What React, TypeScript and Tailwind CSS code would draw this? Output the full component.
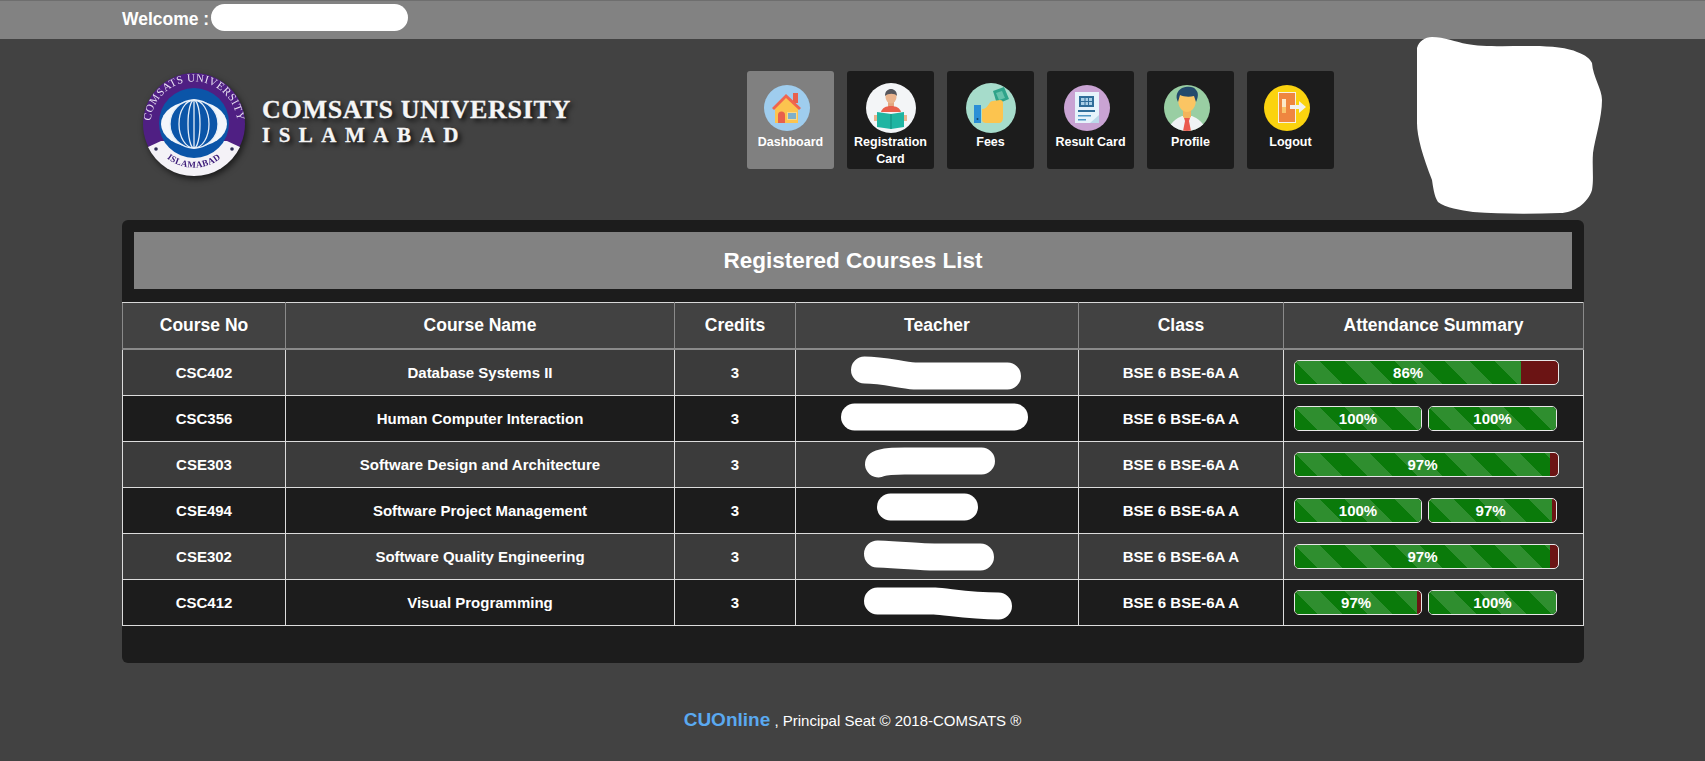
import React from "react";

const courses = [
  { no: "CSC402", name: "Database Systems II", teacher: "M70 18C90 18 105 23 120 24H213", bars: [86] },
  { no: "CSC356", name: "Human Computer Interaction", teacher: "M60 18H220", bars: [100, 100] },
  { no: "CSE303", name: "Software Design and Architecture", teacher: "M84 19C90 16 100 16 110 16H187", bars: [97] },
  { no: "CSE494", name: "Software Project Management", teacher: "M96 16H170", bars: [100, 97] },
  { no: "CSE302", name: "Software Quality Engineering", teacher: "M83 17C110 18 125 20 140 20H186", bars: [97] },
  { no: "CSC412", name: "Visual Programming", teacher: "M83 18H140C155 19 175 23 204 23", bars: [97, 100] },
];

function ProgressBar({ value, className }: { value: number; className: string }) {
  return (
    <div className={`flex h-[25px] overflow-hidden rounded-[5px] border border-[#e8e8e8] bg-[#6b1414] ${className}`}>
      <div
        className="flex items-center justify-center bg-[#0a7a0a] bg-[linear-gradient(45deg,rgba(255,255,255,0.15)_25%,transparent_25%,transparent_50%,rgba(255,255,255,0.15)_50%,rgba(255,255,255,0.15)_75%,transparent_75%,transparent)] bg-[size:50px_50px] pt-[2px] text-[15px] font-bold text-white"
        style={{ width: `${value}%` }}
      >
        {value}%
      </div>
    </div>
  );
}

function NavItem({ label, active, icon }: { label: React.ReactNode; active?: boolean; icon: React.ReactNode }) {
  return (
    <div className={`flex h-[98px] w-[87px] flex-col items-center rounded-[3px] pt-[13px] text-center text-[12.5px] leading-[17px] font-bold text-white ${active ? "bg-[#808080]" : "bg-[#1c1c1c]"}`}>
      <div className="mb-[2px] flex h-[48px] items-center justify-center">{icon}</div>
      {label}
    </div>
  );
}

function Seal() {
  return (
    <svg width="106" height="106" viewBox="0 0 106 106" className="drop-shadow-[2px_3px_3px_rgba(0,0,0,0.6)]">
      <defs>
        <path id="sealTop" d="M 15 75 A 43.500 43.500 0 1 1 91 75" />
        <path id="sealBottom" d="M 14 73 A 44 44 0 0 0 92 73" />
      </defs>
      <circle cx="53" cy="53" r="51" fill="#4f1f83" />
      <path d="M 7 76 A 51 51 0 0 0 99 76 L 86 70 L 20 70 Z" fill="#f4f2f7" />
      <circle cx="53" cy="52" r="35" fill="#0b55a8" />
      <ellipse cx="53" cy="53" rx="33" ry="23" fill="#f2f6fb" />
      <ellipse cx="53" cy="53" rx="24" ry="24" fill="#0b55a8" />
      <g fill="none" stroke="#e6eef8" strokeWidth="1.3">
        <ellipse cx="53" cy="53" rx="24" ry="24" />
        <ellipse cx="53" cy="53" rx="15" ry="24" />
        <ellipse cx="53" cy="53" rx="6" ry="24" />
        <path d="M 53 29 V 77" />
      </g>
      <text fontFamily="'Liberation Serif', serif" fontSize="11" fill="#e9e2f2" letterSpacing="0.5">
        <textPath href="#sealTop" startOffset="50%" textAnchor="middle">COMSATS UNIVERSITY</textPath>
      </text>
      <text fontFamily="'Liberation Serif', serif" fontWeight="700" fontSize="9" fill="#3b1a78" letterSpacing="0.4">
        <textPath href="#sealBottom" startOffset="50%" textAnchor="middle">ISLAMABAD</textPath>
      </text>
      <circle cx="15" cy="78" r="1.8" fill="#2b2b55" />
      <circle cx="91" cy="78" r="1.8" fill="#2b2b55" />
    </svg>
  );
}

const HomeIcon = (
  <svg width="46" height="46" viewBox="0 0 46 46" className="mr-[7px]">
    <circle cx="23" cy="23" r="23" fill="#9fcdee" />
    <path d="M29 8h5v10h-5z" fill="#e8604c" />
    <path d="M11 22 23 12l11 10v16H11z" fill="#fcc44f" />
    <path d="M8 23 22 9l15 14-2 2-13-12L10 25z" fill="#f0654e" />
    <path d="M14 38v-8a3.500 3.500 0 0 1 7 0v8z" fill="#e8604c" />
    <path d="M23 27h10v8H23z" fill="#f7d98a" />
    <path d="M24 28h8v6h-8z" fill="#7fb0c9" />
  </svg>
);

const ReaderIcon = (
  <svg width="50" height="50" viewBox="0 0 50 50">
    <circle cx="25" cy="25" r="25" fill="#f3f5f7" />
    <path d="M22 18h6v8h-6z" fill="#e3a67f" />
    <ellipse cx="25" cy="14" rx="5.500" ry="6.500" fill="#eab48e" />
    <path d="M19 13c0-5 3-7 6-7s6 2 6 7c-2-3-9-3-12 0z" fill="#55565c" />
    <path d="M15 29c1-4 5-6 10-6s9 2 10 6z" fill="#e8604c" />
    <path d="M11 29l14 2 13-2v15l-13 2-14-2z" fill="#1fb5a2" />
    <path d="M24.500 31h1v15h-1z" fill="#148a7b" />
    <path d="M8 32h3v6H8zM38 32h3v6h-3z" fill="#eab48e" />
  </svg>
);

const FeesIcon = (
  <svg width="50" height="50" viewBox="0 0 50 50">
    <circle cx="25" cy="25" r="25" fill="#a6dccb" />
    <path d="M27 8 38 4l5 12-12 5z" fill="#2fa38a" />
    <path d="M30 10l6-2 3 7-6 2z" fill="#66c2ab" />
    <path d="M8 22h7v18H8z" fill="#2b8fd6" />
    <path d="M16 26c3 0 5-2 7-5 1-2 2-3 4-3l7-1c2 0 3 1 3 3v15c0 3-2 5-4 5H20c-2 0-4-1-4-3z" fill="#fcc44f" />
    <circle cx="11.500" cy="36" r="1" fill="#123f66" />
  </svg>
);

const ResultIcon = (
  <svg width="46" height="46" viewBox="0 0 46 46" className="mr-[7px]">
    <circle cx="23" cy="23" r="23" fill="#c9a3d3" />
    <path d="M11 7h24v31H11z" fill="#e6f3fb" />
    <path d="M15 11h15v11H15z" fill="#2f6d99" />
    <path d="M17 13h11v7H17z" fill="#a9cfe6" />
    <path d="M20.500 13h1v7h-1zM24 13h1v7h-1zM17 16h11v1H17z" fill="#2f6d99" />
    <path d="M14 25h17v2H14z" fill="#2f6d99" />
    <path d="M14 30h13v1.500H14zM14 34h8v1.500h-8z" fill="#4f96c4" />
    <path d="M26 38l9-8v8z" fill="#bcd9ea" />
  </svg>
);

const ProfileIcon = (
  <svg width="46" height="46" viewBox="0 0 46 46" className="mr-[7px]">
    <clipPath id="profileClip">
      <circle cx="23" cy="23" r="23" />
    </clipPath>
    <g clipPath="url(#profileClip)">
      <rect width="46" height="46" fill="#99cea3" />
      <path d="M5 46c0-8 8-13 13-15h10c5 2 13 7 13 15z" fill="#f0f3f5" />
      <path d="M19 24h8v8l-4 3-4-3z" fill="#f3b45c" />
      <path d="M14 14c0-5 4-7 9-7s9 2 9 7c0 8-4 13-9 13s-9-5-9-13z" fill="#fbc563" />
      <path d="M14 17c-3-6-1-11 4-14 5-2 12-2 14 2 3 3 2 8 0 12l-2-6c-4 1-10 1-14-1z" fill="#234a6c" />
      <path d="M20 33h6l-1 3 2 10h-8l2-10z" fill="#ea5a4d" />
    </g>
  </svg>
);

const LogoutIcon = (
  <svg width="46" height="46" viewBox="0 0 46 46" className="mr-[7px]">
    <circle cx="23" cy="23" r="23" fill="#fbd30f" />
    <path d="M14 7h18v31H14z" fill="#f6f1e3" />
    <path d="M15 8h16v29H15z" fill="#ef8640" />
    <path d="M18 14h4v8h-4z" fill="#fbe8c8" />
    <path d="M18 22h4v6h-4z" fill="#f9c46b" />
    <path d="M26 20h9v-4l7 6-7 6v-4h-9z" fill="#f2f2ee" />
  </svg>
);

export default function App() {
  return (
    <div className="relative flex min-h-[761px] flex-col overflow-hidden bg-[#424242] font-['Liberation_Sans',Arial,sans-serif] text-white">
      {/* Top bar */}
      <div className="flex h-[39px] items-center border-t border-[#6e6e6e] bg-[#828282] pb-[2px] pl-[122px] text-[17.5px] font-bold">
        Welcome :
        <div className="-mt-[3px] ml-[2px] h-[27px] w-[197px] rounded-full bg-white" />
      </div>

      {/* Header */}
      <div className="flex h-[181px] pl-[122px]">
        <div className="flex w-[625px] items-start pt-[32px] pl-[19px]">
          <Seal />
          <div className="mt-[26px] ml-[15px] font-['Liberation_Serif',serif] leading-none font-bold text-[#f5f5f5] [-webkit-text-stroke:0.3px_#f5f5f5] [text-shadow:3px_3px_5px_rgba(0,0,0,0.8)]">
            <div className="text-[26px] tracking-[0.7px]">COMSATS UNIVERSITY</div>
            <div className="mt-[2px] text-[21px] tracking-[8.5px]">ISLAMABAD</div>
          </div>
        </div>
        <div className="flex gap-[13px] pt-[32px]">
          <NavItem active label="Dashboard" icon={HomeIcon} />
          <NavItem label={<>Registration<br />Card</>} icon={ReaderIcon} />
          <NavItem label="Fees" icon={FeesIcon} />
          <NavItem label="Result Card" icon={ResultIcon} />
          <NavItem label="Profile" icon={ProfileIcon} />
          <NavItem label="Logout" icon={LogoutIcon} />
        </div>
      </div>

      {/* Redacted photo */}
      <svg className="absolute top-[37px] left-[1416px]" width="187" height="177" viewBox="0 0 187 177">
        <path d="M1 11C3 4 9 0 16 0c12 0 24 5 35 7 13 3 40 2 66 2 18 0 36 2 44 6 9 3 13 7 15 11 1 14 10 26 10 37 0 18-7 38-9 53-1 14 1 26-1 37-4 13-18 23-32 23-30 1-60 1-87-1-12-2-28-4-35-10-4-6-5-16-6-22C7 120 1 100 1 86z" fill="#fff" />
      </svg>

      {/* Courses panel */}
      <div className="mr-[121px] ml-[122px] h-[443px] rounded-[6px] bg-[#1c1c1c] pt-[12px]">
        <div className="mx-[12px] flex h-[57px] items-center justify-center bg-[#828282] text-[22.5px] font-bold">
          Registered Courses List
        </div>
        <table className="mt-[13px] w-full table-fixed border-collapse text-center text-[15px] font-bold">
          <colgroup>
            <col className="w-[163px]" />
            <col className="w-[389px]" />
            <col className="w-[121px]" />
            <col className="w-[283px]" />
            <col className="w-[205px]" />
            <col />
          </colgroup>
          <thead>
            <tr className="h-[46px] bg-[#424242] text-[17.5px]">
              {["Course No", "Course Name", "Credits", "Teacher", "Class", "Attendance Summary"].map((h) => (
                <th key={h} className="border border-[#8a8a8a] border-t-[#d8d8d8] border-b-2 font-bold">{h}</th>
              ))}
            </tr>
          </thead>
          <tbody>
            {courses.map((c, i) => (
              <tr key={c.no} className={`${i === 0 ? "h-[47px]" : "h-[46px]"} ${i % 2 === 0 ? "bg-[#3b3b3b]" : "bg-[#1c1c1c]"}`}>
                <td className="border border-[#dcdcdc] pt-[2px]">{c.no}</td>
                <td className="border border-[#dcdcdc] pt-[2px]">{c.name}</td>
                <td className="border border-[#dcdcdc] pt-[2px]">3</td>
                <td className="border border-[#dcdcdc]">
                  <svg width="283" height="40" viewBox="1.5 0 283 40" className="block">
                    <path d={c.teacher} fill="none" stroke="#fff" strokeWidth="27" strokeLinecap="round" strokeLinejoin="round" />
                  </svg>
                </td>
                <td className="border border-[#dcdcdc] pt-[2px]">BSE 6 BSE-6A A</td>
                <td className="border border-[#dcdcdc] pl-[10px]">
                  <div className="flex gap-[6px]">
                    {c.bars.length === 1 ? (
                      <ProgressBar value={c.bars[0]} className="w-[265px]" />
                    ) : (
                      c.bars.map((b, j) => (
                        <ProgressBar key={j} value={b} className={j === 0 ? "w-[128px]" : "w-[129px]"} />
                      ))
                    )}
                  </div>
                </td>
              </tr>
            ))}
          </tbody>
        </table>
      </div>

      {/* Footer */}
      <div className="mt-[45px] text-center text-[15px] leading-[24px]">
        <span className="text-[19px] font-bold text-[#5aa9f0]">CUOnline</span> , Principal Seat © 2018-COMSATS ®
      </div>
    </div>
  );
}
